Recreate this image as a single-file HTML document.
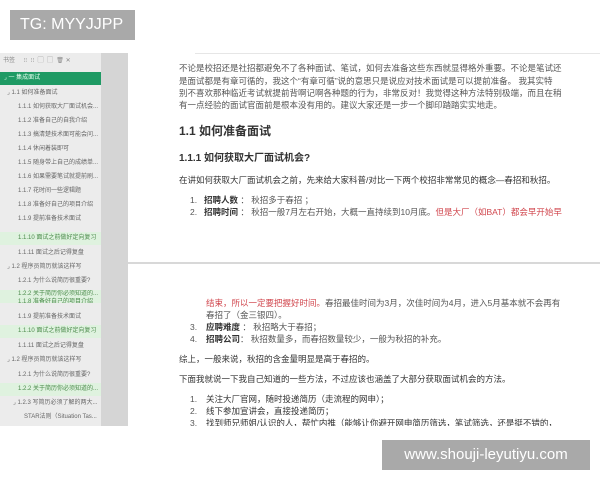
<!DOCTYPE html>
<html><head><meta charset="utf-8"><style>
*{margin:0;padding:0;box-sizing:border-box}
body{width:600px;height:480px;background:#fff;position:relative;overflow:hidden;font-family:"Liberation Sans","Noto Sans CJK SC",sans-serif}
.abs{position:absolute}
.tg{left:10px;top:10px;width:125px;height:30px;background:#a9a9a9;color:#fff;font-size:16px;line-height:30px;padding-left:10px}
.wm{left:382px;top:440px;width:208px;height:30px;background:#a9a9a9;color:#fff;font-size:15px;line-height:30px;text-align:center}
.side{left:0;top:53px;width:101px;height:373px;background:#ececec;overflow:hidden}
.band{left:101px;top:53px;width:27px;height:373px;background:#d5d5d5}
.it{position:absolute;left:0;width:101px;height:13px;font-size:6px;line-height:13px;color:#666;white-space:nowrap;overflow:hidden}
.hl{background:#dff2df;color:#4a8a4a}
.t{position:absolute;font-size:8.5px;line-height:12px;color:#555;white-space:nowrap}
.b{color:#333;font-weight:bold}
.r{color:#d0454c}
</style></head><body>
<div class="abs tg">TG: MYYJJPP</div>
<div class="abs side">
<div class="it" style="top:2px;left:3px;color:#888">书签 &nbsp;&nbsp;&nbsp;&nbsp;⁝⁝ &nbsp;⁝⁝ &nbsp;▢ &nbsp;▢ &nbsp;🗑 ✕</div>
<div class="it" style="top:19px;background:#1f9a64;color:#e8fff0;padding-left:4px;height:13px">⌟ 一 集成面试</div>
<div class="it" style="top:34px;padding-left:7px">⌟ 1.1 如何准备面试</div>
<div class="it" style="top:48px;padding-left:18px">1.1.1 如何获取大厂面试机会...</div>
<div class="it" style="top:62px;padding-left:18px">1.1.2 准备自己的自我介绍</div>
<div class="it" style="top:76px;padding-left:18px">1.1.3 搞清楚技术面可能会问...</div>
<div class="it" style="top:90px;padding-left:18px">1.1.4 休闲着装即可</div>
<div class="it" style="top:104px;padding-left:18px">1.1.5 随身带上自己的成绩单...</div>
<div class="it" style="top:118px;padding-left:18px">1.1.6 如果需要笔试就提前刷...</div>
<div class="it" style="top:132px;padding-left:18px">1.1.7 花时间一些逻辑题</div>
<div class="it" style="top:146px;padding-left:18px">1.1.8 准备好自己的项目介绍</div>
<div class="it" style="top:160px;padding-left:18px">1.1.9 提前准备技术面试</div>
<div class="it hl" style="top:179px;padding-left:18px">1.1.10 面试之前做好定向复习</div>
<div class="it" style="top:194px;padding-left:18px">1.1.11 面试之后记得复盘</div>
<div class="it" style="top:208px;padding-left:7px">⌟ 1.2 程序员简历就该这样写</div>
<div class="it" style="top:222px;padding-left:18px">1.2.1 为什么说简历很重要?</div>
<div class="it hl" style="top:237px;padding-left:18px;line-height:8px">1.2.2 关于简历你必须知道的...<br>1.1.8 准备好自己的项目介绍</div>
<div class="it" style="top:258px;padding-left:18px">1.1.9 提前准备技术面试</div>
<div class="it hl" style="top:272px;padding-left:18px">1.1.10 面试之前做好定向复习</div>
<div class="it" style="top:287px;padding-left:18px">1.1.11 面试之后记得复盘</div>
<div class="it" style="top:301px;padding-left:7px">⌟ 1.2 程序员简历就该这样写</div>
<div class="it" style="top:316px;padding-left:18px">1.2.1 为什么说简历很重要?</div>
<div class="it hl" style="top:330px;padding-left:18px">1.2.2 关于简历你必须知道的...</div>
<div class="it" style="top:344px;padding-left:13px">⌟ 1.2.3 写简历必须了解的两大...</div>
<div class="it" style="top:358px;padding-left:24px">STAR法则（Situation Tas...</div>
</div>
<div class="abs band"></div>
<div class="abs" style="left:195px;top:53px;width:405px;height:1px;background:#e6e6e6"></div>
<div class="abs" style="left:128px;top:262px;width:472px;height:2px;background:#d8d8d8"></div>
<div class="t" style="left:179px;top:62px">不论是校招还是社招都避免不了各种面试、笔试，如何去准备这些东西就显得格外重要。不论是笔试还</div>
<div class="t" style="left:179px;top:75px">是面试都是有章可循的，我这个“有章可循”说的意思只是说应对技术面试是可以提前准备。 我其实特</div>
<div class="t" style="left:179px;top:87px">别不喜欢那种临近考试就提前背啊记啊各种题的行为，非常反对！我觉得这种方法特别极端，而且在稍</div>
<div class="t" style="left:179px;top:99px">有一点经验的面试官面前是根本没有用的。建议大家还是一步一个脚印踏踏实实地走。</div>
<div class="t b" style="left:179px;top:122px;font-size:12px;line-height:18px">1.1 如何准备面试</div>
<div class="t b" style="left:179px;top:151px;font-size:10px;line-height:16px">1.1.1 如何获取大厂面试机会?</div>
<div class="t" style="left:179px;top:174px;color:#333">在讲如何获取大厂面试机会之前，先来给大家科普/对比一下两个校招非常常见的概念—春招和秋招。</div>
<div class="t" style="left:190px;top:194px"><span style="display:inline-block;width:14px">1.</span><span class="b">招聘人数</span> ： 秋招多于春招 ；</div>
<div class="t" style="left:190px;top:206px"><span style="display:inline-block;width:14px">2.</span><span class="b">招聘时间</span> ：  秋招一般7月左右开始，大概一直持续到10月底。<span class="r">但是大厂（如BAT）都会早开始早</span></div>
<div class="t" style="left:206px;top:297px"><span class="r">结束，所以一定要把握好时间。</span>春招最佳时间为3月，次佳时间为4月，进入5月基本就不会再有</div>
<div class="t" style="left:206px;top:309px">春招了（金三银四）。</div>
<div class="t" style="left:190px;top:321px"><span style="display:inline-block;width:16px">3.</span><span class="b">应聘难度</span> ： 秋招略大于春招；</div>
<div class="t" style="left:190px;top:333px"><span style="display:inline-block;width:16px">4.</span><span class="b">招聘公司</span>：  秋招数量多，而春招数量较少，一般为秋招的补充。</div>
<div class="t" style="left:179px;top:353px;color:#333">综上，一般来说，秋招的含金量明显是高于春招的。</div>
<div class="t" style="left:179px;top:373px;color:#333">下面我就说一下我自己知道的一些方法，不过应该也涵盖了大部分获取面试机会的方法。</div>
<div class="t" style="left:190px;top:393px;color:#333"><span style="display:inline-block;width:16px;color:#555">1.</span>关注大厂官网，随时投递简历（走流程的网申）；</div>
<div class="t" style="left:190px;top:405px;color:#333"><span style="display:inline-block;width:16px;color:#555">2.</span>线下参加宣讲会，直接投递简历；</div>
<div class="abs" style="left:128px;top:417px;width:472px;height:9px;overflow:hidden"><div class="t" style="left:62px;top:0;color:#333"><span style="display:inline-block;width:16px;color:#555">3.</span>找到师兄师姐/认识的人，帮忙内推（能够让你避开网申简历筛选，笔试筛选，还是挺不错的，</div></div>
<div class="abs wm">www.shouji-leyutiyu.com</div>
</body></html>
